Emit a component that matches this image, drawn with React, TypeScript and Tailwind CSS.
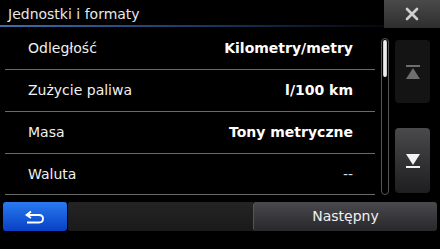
import { X } from "lucide-react";

type Row = { label: string; value: string; bold?: boolean };

const ROWS: Row[] = [
  { label: "Odległość", value: "Kilometry/metry", bold: true },
  { label: "Zużycie paliwa", value: "l/100 km", bold: true },
  { label: "Masa", value: "Tony metryczne", bold: true },
  { label: "Waluta", value: "--" },
];

function BackIcon() {
  return (
    <svg width="22" height="14" viewBox="0 0 22 14" fill="none">
      <path d="M7 1.5 L2.5 5 L7 8" stroke="white" strokeWidth="1.8" fill="none" />
      <path d="M2.5 5 H15 Q19 5 19 8.75 Q19 12.5 15 12.5 H3" stroke="white" strokeWidth="1.8" fill="none" />
    </svg>
  );
}

function ArrowTop({ color }: { color: string }) {
  return (
    <svg width="16" height="16" viewBox="0 0 16 16">
      <rect x="1" y="1" width="14" height="2" fill={color} />
      <polygon points="8,4 15,15 1,15" fill={color} />
    </svg>
  );
}

function ArrowBottom({ color }: { color: string }) {
  return (
    <svg width="16" height="16" viewBox="0 0 16 16">
      <polygon points="1,1 15,1 8,12" fill={color} />
      <rect x="1" y="13" width="14" height="2" fill={color} />
    </svg>
  );
}

export default function App() {
  return (
    <div
      className="w-[440px] h-[249px] bg-black text-white flex flex-col overflow-hidden"
      style={{ fontFamily: '"DejaVu Sans", Verdana, sans-serif' }}
    >
      {/* header */}
      <div className="h-[28px] flex shrink-0">
        <div className="flex-1 relative flex items-center pl-[8px] text-[14px] text-[#e8e8e8]">
          Jednostki i formaty
          <div className="absolute left-0 right-0 bottom-[1px] h-[2px] bg-gradient-to-r from-[#3d6fb0] via-[#1d3a66] to-[#05080e]" />
        </div>
        <div className="w-[56px] bg-gradient-to-b from-[#4a4a4a] to-[#2e2e2e] flex items-center justify-center">
          <X size={20} strokeWidth={3.2} color="#d0d0d0" />
        </div>
      </div>

      {/* body */}
      <div className="flex flex-1">
        <div className="w-[370px] ml-[5px] flex flex-col">
          {ROWS.map((r, i) => (
            <div
              key={r.label}
              className={`flex items-center justify-between pl-[23px] pr-[22px] border-b border-[#6a6a6a] ${i === 3 ? "h-[41px]" : "h-[42px]"}`}
            >
              <span className="text-[14px] text-[#f0f0f0]">{r.label}</span>
              <span className={`text-[14px] ${r.bold ? "font-bold text-white" : "text-[#dddddd]"}`}>{r.value}</span>
            </div>
          ))}
        </div>

        {/* scrollbar */}
        <div className="ml-[6px] mt-[10px] w-[8px] h-[157px] rounded-[4px] border border-[#555] p-[1px]">
          <div className="h-[37px] rounded-[3px] bg-gradient-to-r from-[#bbbbbb] via-white to-[#bbbbbb]" />
        </div>

        {/* arrows */}
        <div className="ml-[6px] mt-[12px] flex flex-col gap-[25px]">
          <div className="w-[35px] h-[63px] rounded-[4px] bg-[#141414] flex items-center justify-center">
            <ArrowTop color="#6e6e6e" />
          </div>
          <div className="w-[35px] h-[65px] rounded-[4px] bg-gradient-to-b from-[#4a4a4d] to-[#1e1e20] flex items-center justify-center">
            <ArrowBottom color="#f2f2f2" />
          </div>
        </div>
      </div>

      {/* footer */}
      <div className="h-[29px] mb-[18px] mx-[3px] flex shrink-0">
        <div className="w-[64px] rounded-[3px] bg-gradient-to-b from-[#2a7af0] to-[#0a3fc4] flex items-center justify-center">
          <BackIcon />
        </div>
        <div className="flex-1 ml-[1px] rounded-l-[2px] bg-gradient-to-b from-[#242424] to-[#1a1a1a]" />
        <div className="w-[184px] rounded-[3px] bg-gradient-to-b from-[#4a4a4e] to-[#28282c] border-l border-[#555] flex items-center justify-center text-[14px] text-[#f0f0f0]">
          Następny
        </div>
      </div>
    </div>
  );
}
